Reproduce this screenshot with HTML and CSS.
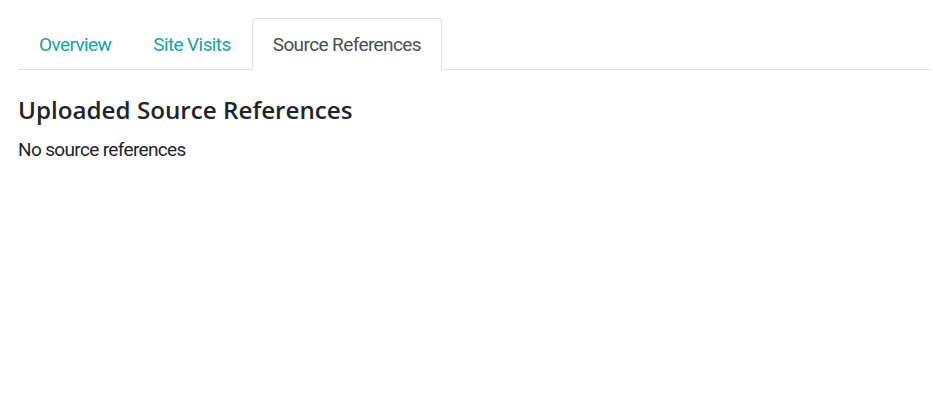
FILE: index.html
```html
<!DOCTYPE html>
<html>
<head>
<meta charset="utf-8">
<link rel="stylesheet" href="styles.css">
</head>
<body>
<div class="page">
  <ul class="tabs">
    <li class="tab"><a href="#">Overview</a></li>
    <li class="tab"><a href="#">Site Visits</a></li>
    <li class="tab active"><a href="#">Source References</a></li>
  </ul>
  <h2 class="title">Uploaded Source References</h2>
  <p class="empty">No source references</p>
</div>
</body>
</html>
```
FILE: styles.css
```css
html, body { margin: 0; padding: 0; background: #fff; }
.page {
  padding: 18px 3px 0 18px;
  font-family: Roboto, "Liberation Sans", sans-serif;
  color: #212529;
}
.tabs {
  list-style: none;
  margin: 0;
  padding: 0;
  display: flex;
  border-bottom: 1px solid #dee2e6;
}
.tab { margin-bottom: -1px; }
.tab a {
  display: block;
  height: 52px;
  box-sizing: border-box;
  padding: 14px 20px 0;
  font-size: 19px;
  line-height: 24px;
  color: #17a2a0;
  text-decoration: none;
  border: 1px solid transparent;
  border-radius: 4px 4px 0 0;
  letter-spacing: -0.6px;
}
.tab.active a {
  color: #495057;
  background: #fff;
  border-color: #dee2e6 #dee2e6 #fff;
}
.title {
  margin: 24px 0 0;
  font-family: "Open Sans", sans-serif;
  font-weight: 600;
  font-size: 24.2px;
  line-height: 32px;
  color: #212529;
}
.empty {
  margin: 12px 0 0;
  font-size: 19px;
  line-height: 24px;
  letter-spacing: -0.65px;
}
```
